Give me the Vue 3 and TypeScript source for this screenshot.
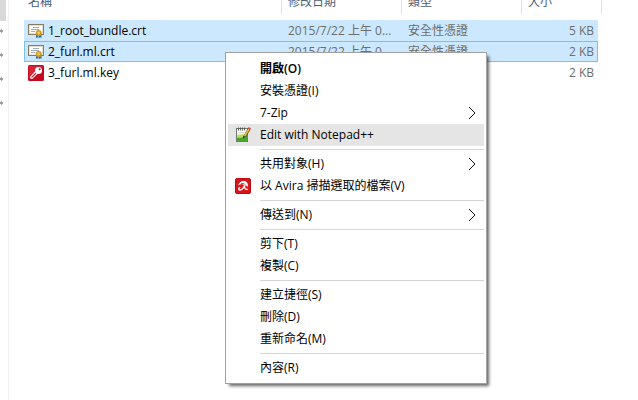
<script setup lang="ts">
type FileIcon = 'certificate' | 'key'

interface FileRow {
  name: string
  icon: FileIcon
  date: string
  type: string
  size: string
  selected: boolean
  focused: boolean
}

interface MenuItem {
  label: string
  icon?: 'notepad' | 'avira'
  submenu?: boolean
  bold?: boolean
  active?: boolean
}

const files: FileRow[] = [
  { name: '1_root_bundle.crt', icon: 'certificate', date: '2015/7/22 上午 0...', type: '安全性憑證', size: '5 KB', selected: true, focused: false },
  { name: '2_furl.ml.crt', icon: 'certificate', date: '2015/7/22 上午 0...', type: '安全性憑證', size: '2 KB', selected: true, focused: true },
  { name: '3_furl.ml.key', icon: 'key', date: '', type: '', size: '2 KB', selected: false, focused: false },
]

const groups: MenuItem[][] = [
  [
    { label: '開啟(O)', bold: true },
    { label: '安裝憑證(I)' },
    { label: '7-Zip', submenu: true },
    { label: 'Edit with Notepad++', icon: 'notepad', active: true },
  ],
  [
    { label: '共用對象(H)', submenu: true },
    { label: '以 Avira 掃描選取的檔案(V)', icon: 'avira' },
  ],
  [{ label: '傳送到(N)', submenu: true }],
  [{ label: '剪下(T)' }, { label: '複製(C)' }],
  [{ label: '建立捷徑(S)' }, { label: '刪除(D)' }, { label: '重新命名(M)' }],
  [{ label: '內容(R)' }],
]
</script>

<template>
  <div class="explorer">
    <aside class="sidebar">
      <div class="thumb"></div>
      <svg v-for="n in 4" :key="n" class="pin" viewBox="0 0 4 8" aria-hidden="true">
        <path d="M0 3h1V1.500l2.300 2.500L1 6.500V5H0z" fill="#9299a0" />
      </svg>
    </aside>

    <main class="content">
      <table class="files">
        <colgroup>
          <col />
          <col class="col-date" />
          <col class="col-type" />
          <col class="col-size" />
          <col class="col-end" />
        </colgroup>
        <thead>
          <tr>
            <th scope="col"><span class="head">名稱</span></th>
            <th scope="col"><span class="head">修改日期</span></th>
            <th scope="col"><span class="head">類型</span></th>
            <th scope="col"><span class="head open">大小</span></th>
            <td><span class="head last"></span></td>
          </tr>
        </thead>
        <tbody>
          <tr v-for="file in files" :key="file.name" :class="{ selected: file.selected, focused: file.focused }">
            <td class="name">
              <div class="file">
                <svg v-if="file.icon === 'certificate'" class="icon" viewBox="0 0 16 16" aria-hidden="true">
                  <rect x="0.500" y="1.500" width="15" height="10" fill="#fff" stroke="#8a7a60" />
                  <rect x="1.500" y="2.500" width="13" height="8" fill="#fff" stroke="#e6e0d2" />
                  <path d="M5 4.500h6M3 6.500h8M3 8.500h4" stroke="#9eacbe" />
                  <path d="M8 10.500v4.500l1.300-.8 1.200.8v-4zM11 11v4l1.200-.8L13.500 15v-4.500z" fill="#2f6cb8" />
                  <circle cx="10.700" cy="10" r="3" fill="#cf9a1c" />
                  <circle cx="10.700" cy="10" r="1.400" fill="#f0cb55" />
                </svg>
                <svg v-else class="icon" viewBox="0 0 16 16" aria-hidden="true">
                  <rect width="16" height="16" rx="1.500" fill="#c40a1c" />
                  <path d="M1 1h14L1 14z" fill="#d92435" />
                  <circle cx="10.500" cy="5.500" r="3.500" fill="#fff" />
                  <circle cx="11.700" cy="4.300" r="1" fill="#c90e20" />
                  <path d="M8.500 7.500 3.700 12.300" stroke="#fff" stroke-width="3.200" stroke-linecap="round" />
                  <path d="M7.700 8.400 3.900 12.200" stroke="#c90e20" stroke-width="1.200" stroke-linecap="round" />
                </svg>
                <span>{{ file.name }}</span>
              </div>
            </td>
            <td>{{ file.date }}</td>
            <td>{{ file.type }}</td>
            <td class="size">{{ file.size }}</td>
            <td class="end"></td>
          </tr>
        </tbody>
      </table>
    </main>

    <div class="menu" role="menu">
      <div v-for="(group, index) in groups" :key="index" class="group" role="group">
        <button
          v-for="item in group"
          :key="item.label"
          type="button"
          role="menuitem"
          class="item"
          :class="{ active: item.active, bold: item.bold }"
        >
          <span class="slot">
            <svg v-if="item.icon === 'notepad'" class="icon" viewBox="0 0 16 16" aria-hidden="true">
              <rect x="1.500" y="1.500" width="11" height="13" fill="#fbfcf8" stroke="#737b70" />
              <path d="M2 8q5-1.500 10 0v6H2z" fill="#b9e05e" />
              <path d="M2 11q5 0 10-2.500V14H2z" fill="#48a42c" />
              <path d="M3.500 0.500v3M5.500 0.500v3M7.500 0.500v3M9.500 0.500v3" stroke="#4e5650" stroke-width="0.900" />
              <path d="M4 5.500h5" stroke="#d3d9d4" />
              <path d="M14.200 2 9.600 9.500" stroke="#6b5420" stroke-width="2.800" />
              <path d="M14 2 9.600 9" stroke="#efc045" stroke-width="1.500" />
              <path d="m13.300 0.800 2.300 1.400" stroke="#c4503c" stroke-width="1.800" />
              <path d="m8.300 8.700-.3 2.600 2.500-1.200z" fill="#333" />
            </svg>
            <svg v-else-if="item.icon === 'avira'" class="icon" viewBox="0 0 16 16" aria-hidden="true">
              <rect x="0.500" y="0.500" width="15" height="15" rx="1.500" fill="#d8141d" stroke="#b90d16" />
              <path d="M3 7.800C3.800 5 6 3 8.600 3c3.200 0 4.900 2.600 4.200 6.300-.8-1.500-2-2-3.300-1.500C8.500 6 5.500 5.800 3 7.800z" fill="#fff" />
              <path d="M6 5.800q2.600-1.300 4.400 1" fill="none" stroke="#d8141d" stroke-width="0.900" />
              <path d="M9.600 7.300C8.600 10 7 12 5 12c-1.700 0-1.700-1.900-.3-2.300" fill="none" stroke="#fff" stroke-width="1.400" stroke-linecap="round" />
              <path d="M9.600 8.500c0 2.200.8 3.200 2.900 2.900" fill="none" stroke="#fff" stroke-width="1.300" stroke-linecap="round" />
            </svg>
          </span>
          <span class="label">{{ item.label }}</span>
          <svg v-if="item.submenu" class="chevron" viewBox="0 0 8 14" aria-hidden="true">
            <path d="M1 1l6 6-6 6" fill="none" stroke="#111" stroke-width="1" />
          </svg>
        </button>
      </div>
    </div>
  </div>
</template>

<style>
html,
body,
#app {
  height: 100%;
}

body {
  margin: 0;
  overflow: hidden;
  background: #fff;
}
</style>

<style scoped>
.explorer {
  display: flex;
  position: relative;
  height: 100%;
  overflow: hidden;
  font-family: "Open Sans", "Noto Sans CJK TC", sans-serif;
  font-size: 12px;
  color: #000;
}

.sidebar {
  display: flex;
  flex-direction: column;
  gap: 16px;
  box-sizing: border-box;
  width: 9px;
  border-right: 1px solid #f0f0f0;
}

.thumb {
  width: 6px;
  height: 21px;
  margin-bottom: -10px;
  background: #d9d9d9;
}

.pin {
  width: 4px;
  height: 8px;
}

.content {
  flex: 1;
  min-width: 0;
  margin-top: -10px;
  padding: 0 36px 0 15px;
}

.files {
  width: 100%;
  table-layout: fixed;
  border-collapse: separate;
  border-spacing: 0;
}

.col-date,
.col-type {
  width: 120px;
}

.col-size {
  width: 76px;
}

.col-end {
  width: 4px;
}

.files th,
.files thead td {
  height: 30px;
  padding: 0;
  vertical-align: top;
  font-weight: 400;
  text-align: left;
  color: #4c607a;
}

.head {
  display: block;
  box-sizing: border-box;
  height: 24px;
  padding-left: 6px;
  border-right: 1px solid #e2e2e2;
  line-height: 24px;
}

th:first-child .head {
  padding-left: 4px;
}

.open {
  border-right: 0;
}

.last {
  padding: 0;
}

.files tbody td {
  box-sizing: border-box;
  height: 21px;
  padding: 0 6px;
  border: 0 solid #7cc0ee;
  line-height: 19px;
  white-space: nowrap;
  color: #6d6d6d;
}

.files tbody .name {
  padding: 0 0 0 4px;
  color: #000;
}

.files tbody .size {
  padding: 0 4px;
  text-align: right;
}

.files tbody .end {
  padding: 0;
}

.selected td:not(.end) {
  background: #cce8ff;
}

.files .focused td:not(.end) {
  border-top-width: 1px;
  border-bottom-width: 1px;
}

.files .focused .name {
  padding-left: 3px;
  border-left-width: 1px;
}

.files .focused .size {
  padding-right: 3px;
  border-right-width: 1px;
}

.file {
  display: flex;
  align-items: center;
  gap: 4px;
  height: 19px;
}

.icon {
  display: block;
  flex: none;
  width: 16px;
  height: 16px;
}

.menu {
  position: absolute;
  top: 52px;
  left: 225px;
  box-sizing: border-box;
  width: 262px;
  padding: 5px 2px 4px;
  border: 1px solid #a0a0a0;
  background: #fff;
  box-shadow: 3px 3px 3px -1px rgba(0, 0, 0, 0.6);
}

.group + .group::before {
  content: "";
  display: block;
  height: 1px;
  margin: 3px 0 3px 32px;
  background: #d5d5d5;
}

.item {
  display: flex;
  align-items: center;
  width: 100%;
  height: 22px;
  padding: 0 8px 0 7px;
  border: 0;
  background: transparent;
  font: inherit;
  line-height: 22px;
  color: #000;
  text-align: left;
  white-space: nowrap;
}

.item.active {
  background: #e5e5e5;
}

.item.bold {
  font-weight: 600;
}

.slot {
  width: 25px;
}

.label {
  flex: 1;
}

.chevron {
  width: 8px;
  height: 14px;
}
</style>
